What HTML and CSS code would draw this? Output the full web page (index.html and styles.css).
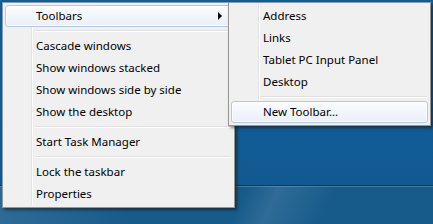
FILE: index.html
```html
<!DOCTYPE html>
<html>
<head>
<meta charset="utf-8">
<link rel="stylesheet" href="styles.css">
</head>
<body>
<div class="screen">
  <div class="desktop"></div>
  <div class="taskbar"></div>

  <div class="menu main">
    <div class="gutter"></div>
    <div class="item hot"><span>Toolbars</span><span class="arrow"></span></div>
    <div class="sep"></div>
    <div class="item"><span>Cascade windows</span></div>
    <div class="item"><span>Show windows stacked</span></div>
    <div class="item"><span>Show windows side by side</span></div>
    <div class="item"><span>Show the desktop</span></div>
    <div class="sep"></div>
    <div class="item"><span>Start Task Manager</span></div>
    <div class="sep"></div>
    <div class="item"><span>Lock the taskbar</span></div>
    <div class="item"><span>Properties</span></div>
  </div>

  <div class="menu sub">
    <div class="gutter"></div>
    <div class="item"><span>Address</span></div>
    <div class="item"><span>Links</span></div>
    <div class="item"><span>Tablet PC Input Panel</span></div>
    <div class="item"><span>Desktop</span></div>
    <div class="sep"></div>
    <div class="item hot"><span>New Toolbar...</span></div>
  </div>
</div>
</body>
</html>
```
FILE: styles.css
```css
html, body {
  margin: 0;
  padding: 0;
}
body {
  width: 433px;
  height: 224px;
  overflow: hidden;
  font-family: "Noto Sans", "Open Sans", sans-serif;
  font-size: 11.5px;
  color: #000;
}
.screen {
  position: relative;
  width: 433px;
  height: 224px;
  display: flex;
  flex-direction: column;
}
.desktop {
  height: 185px;
  background: linear-gradient(180deg, #10609c 0%, #125d96 60%, #115a91 100%);
}
.taskbar {
  flex: 1;
  border-top: 1px solid #0a3b60;
  box-shadow: inset 0 1px 0 rgba(255,255,255,0.18);
  background:
    linear-gradient(115deg, rgba(255,255,255,0) 0%, rgba(255,255,255,0) 55%, rgba(255,255,255,0.10) 62%, rgba(255,255,255,0) 75%),
    linear-gradient(70deg, rgba(255,255,255,0.10) 0%, rgba(255,255,255,0) 30%),
    #175b8b;
}
.menu {
  position: absolute;
  box-sizing: border-box;
  background: #f0f0f0;
  border: 1px solid #979797;
  padding: 2px;
  box-shadow: 2px 2px 3px rgba(0,0,0,0.45);
}
.main {
  left: 2px;
  top: 2px;
  width: 233px;
}
.sub {
  left: 228px;
  top: 2px;
  width: 203px;
}
.gutter {
  position: absolute;
  top: 2px;
  bottom: 2px;
  left: 28px;
  width: 1px;
  background: #e2e3e3;
  box-shadow: 1px 0 0 #ffffff;
}
.sub .gutter {
  left: 29px;
}
.item {
  position: relative;
  height: 22px;
  box-sizing: border-box;
  display: flex;
  align-items: center;
  justify-content: space-between;
  padding-left: 30px;
  padding-right: 9px;
  border: 1px solid transparent;
  border-radius: 3px;
  line-height: 1;
}
.sub .item {
  padding-left: 31px;
}
.item.hot {
  border-color: #b4c8e3;
  background: linear-gradient(180deg, #fbfcfe 0%, #f2f5fa 50%, #ebf0f7 100%);
  box-shadow: inset 0 0 0 1px rgba(255,255,255,0.7);
}
.arrow {
  width: 0;
  height: 0;
  border-top: 4px solid transparent;
  border-bottom: 4px solid transparent;
  border-left: 4px solid #000;
}
.sep {
  position: relative;
  height: 8px;
}
.sep::after {
  content: "";
  position: absolute;
  left: 30px;
  right: 1px;
  top: 3px;
  height: 1px;
  background: #e0e0e0;
  box-shadow: 0 1px 0 #ffffff;
}
```
